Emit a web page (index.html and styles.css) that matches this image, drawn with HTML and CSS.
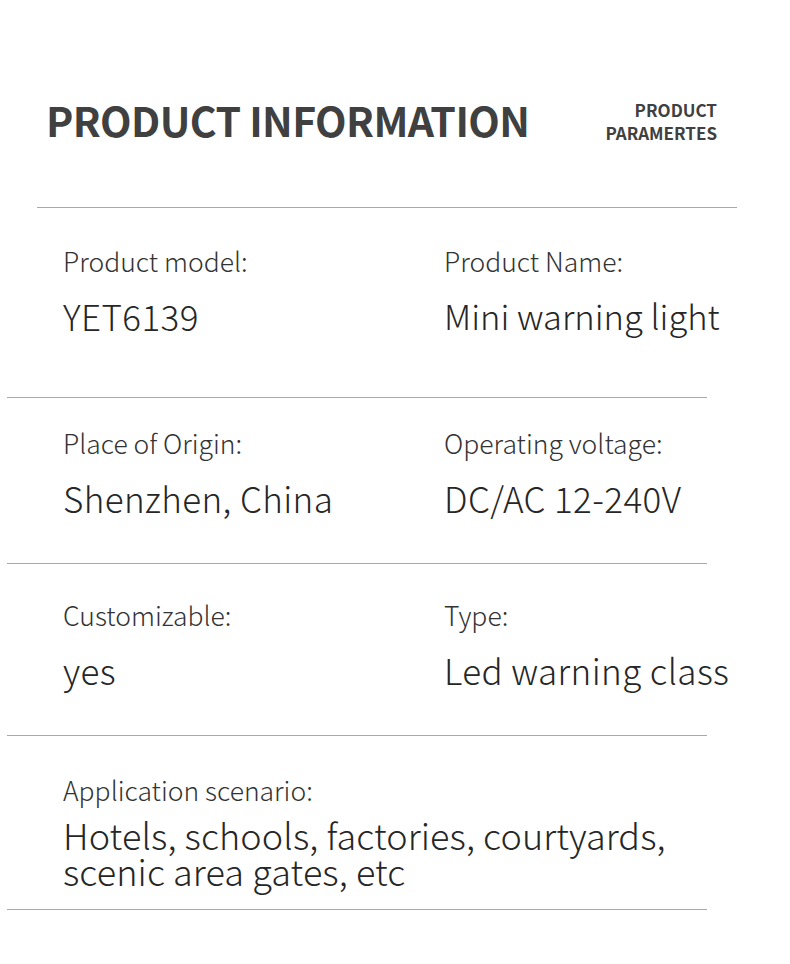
FILE: index.html
```html
<!DOCTYPE html>
<html lang="en">
<head>
<meta charset="utf-8">
<title>Product Information</title>
<link rel="stylesheet" href="styles.css">
</head>
<body>
<div class="page">
  <header class="header">
    <h1 class="title">PRODUCT INFORMATION</h1>
    <div class="subtitle">PRODUCT<br>PARAMERTES</div>
  </header>

  <section class="row row-1">
    <div class="cell">
      <div class="label">Product model:</div>
      <div class="value">YET6139</div>
    </div>
    <div class="cell">
      <div class="label">Product Name:</div>
      <div class="value value-tight">Mini warning light</div>
    </div>
  </section>

  <section class="row row-2">
    <div class="cell">
      <div class="label">Place of Origin:</div>
      <div class="value">Shenzhen, China</div>
    </div>
    <div class="cell">
      <div class="label">Operating voltage:</div>
      <div class="value">DC/AC 12-240V</div>
    </div>
  </section>

  <section class="row row-3">
    <div class="cell">
      <div class="label">Customizable:</div>
      <div class="value">yes</div>
    </div>
    <div class="cell">
      <div class="label">Type:</div>
      <div class="value">Led warning class</div>
    </div>
  </section>

  <section class="row row-4">
    <div class="cell cell-wide">
      <div class="label">Application scenario:</div>
      <div class="value value-multi">Hotels, schools, factories, courtyards,<br>scenic area gates, etc</div>
    </div>
  </section>
</div>
</body>
</html>
```

FILE: styles.css
```css
* {
  box-sizing: border-box;
}

html, body {
  margin: 0;
  padding: 0;
  background: #ffffff;
}

body {
  font-family: "Noto Sans CJK SC", "Noto Sans", sans-serif;
  color: #2e2e2e;
  width: 790px;
}

.page {
  width: 790px;
}

.header {
  margin-left: 37px;
  width: 700px;
  padding: 98px 20px 63px 9px;
  display: flex;
  justify-content: space-between;
  align-items: flex-start;
  border-bottom: 1px solid #a9a9a9;
}

.title {
  margin: 0;
  font-size: 41px;
  line-height: 42px;
  font-weight: 700;
  color: #404040;
  letter-spacing: -0.6px;
}

.subtitle {
  font-size: 17px;
  line-height: 23px;
  font-weight: 700;
  color: #404040;
  text-align: right;
}

.row {
  margin-left: 7px;
  width: 700px;
  padding-left: 56px;
  display: grid;
  grid-template-columns: 381px 1fr;
  border-bottom: 1px solid #a9a9a9;
}

.row-1 {
  padding-top: 40px;
  padding-bottom: 64px;
}

.row-2 {
  padding-top: 32px;
  padding-bottom: 48px;
}

.row-3 {
  padding-top: 38px;
  padding-bottom: 48px;
}

.row-4 {
  padding-top: 41px;
  padding-bottom: 21px;
}

.cell-wide {
  grid-column: 1 / -1;
}

.label {
  font-size: 26.5px;
  line-height: 26px;
  font-weight: 300;
  color: #333333;
  margin-bottom: 24px;
}

.value {
  font-size: 35px;
  line-height: 35px;
  font-weight: 300;
  letter-spacing: 0.4px;
  color: #262626;
  white-space: nowrap;
}

.value-tight {
  letter-spacing: 0;
  font-size: 34.5px;
}

.row-4 .label {
  margin-bottom: 13px;
}

.value-multi {
  font-size: 36px;
  line-height: 36px;
  letter-spacing: 0.1px;
}
```
